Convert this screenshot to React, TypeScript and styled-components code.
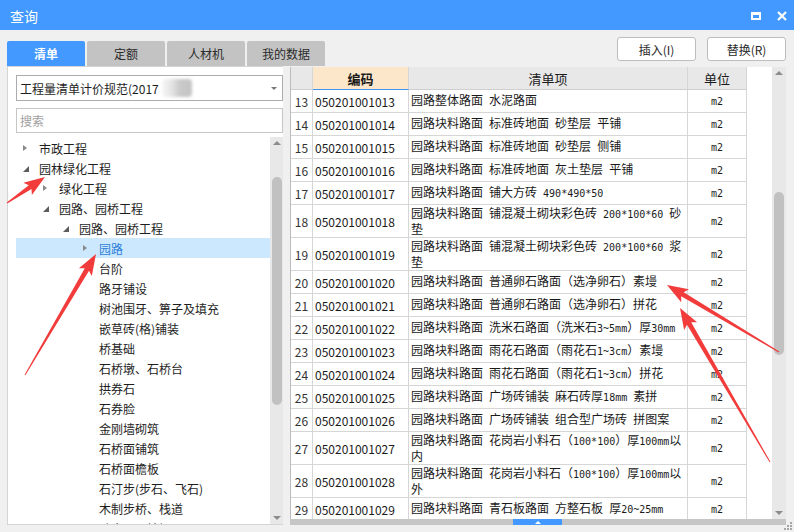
import React from 'react'
import styled, { createGlobalStyle } from 'styled-components'

const BLUE = '#4399ff'
const GRID = '#d6d6d6'

const GlobalStyle = createGlobalStyle`
  html, body {
    margin: 0;
    padding: 0;
    background: #f0f0f0;
    overflow: hidden;
  }
  body {
    font-family: "Noto Sans CJK SC", "Noto Sans", sans-serif;
  }
  * {
    box-sizing: border-box;
  }
`

interface TreeNode {
  label: string
  level: number
  icon?: 'open' | 'closed'
  selected?: boolean
}

const treeNodes: TreeNode[] = [
  { label: '市政工程', level: 0, icon: 'closed' },
  { label: '园林绿化工程', level: 0, icon: 'open' },
  { label: '绿化工程', level: 1, icon: 'closed' },
  { label: '园路、园桥工程', level: 1, icon: 'open' },
  { label: '园路、园桥工程', level: 2, icon: 'open' },
  { label: '园路', level: 3, icon: 'closed', selected: true },
  { label: '台阶', level: 3 },
  { label: '路牙铺设', level: 3 },
  { label: '树池围牙、箅子及填充', level: 3 },
  { label: '嵌草砖(格)铺装', level: 3 },
  { label: '桥基础', level: 3 },
  { label: '石桥墩、石桥台', level: 3 },
  { label: '拱券石', level: 3 },
  { label: '石券脸', level: 3 },
  { label: '金刚墙砌筑', level: 3 },
  { label: '石桥面铺筑', level: 3 },
  { label: '石桥面檐板', level: 3 },
  { label: '石汀步(步石、飞石)', level: 3 },
  { label: '木制步桥、栈道', level: 3 },
  { label: '踏步石、地坪石', level: 3 },
]

// [序号, 编码, 清单项 (one entry per line), 单位]
const rows: [string, string, string[], string][] = [
  ['13', '050201001013', ['园路整体路面 水泥路面'], 'm2'],
  ['14', '050201001014', ['园路块料路面 标准砖地面 砂垫层 平铺'], 'm2'],
  ['15', '050201001015', ['园路块料路面 标准砖地面 砂垫层 侧铺'], 'm2'],
  ['16', '050201001016', ['园路块料路面 标准砖地面 灰土垫层 平铺'], 'm2'],
  ['17', '050201001017', ['园路块料路面 铺大方砖 490*490*50'], 'm2'],
  ['18', '050201001018', ['园路块料路面 铺混凝土砌块彩色砖 200*100*60 砂', '垫'], 'm2'],
  ['19', '050201001019', ['园路块料路面 铺混凝土砌块彩色砖 200*100*60 浆', '垫'], 'm2'],
  ['20', '050201001020', ['园路块料路面 普通卵石路面（选净卵石）素墁'], 'm2'],
  ['21', '050201001021', ['园路块料路面 普通卵石路面（选净卵石）拼花'], 'm2'],
  ['22', '050201001022', ['园路块料路面 洗米石路面（洗米石3~5mm）厚30mm'], 'm2'],
  ['23', '050201001023', ['园路块料路面 雨花石路面（雨花石1~3cm）素墁'], 'm2'],
  ['24', '050201001024', ['园路块料路面 雨花石路面（雨花石1~3cm）拼花'], 'm2'],
  ['25', '050201001025', ['园路块料路面 广场砖铺装 麻石砖厚18mm 素拼'], 'm2'],
  ['26', '050201001026', ['园路块料路面 广场砖铺装 组合型广场砖 拼图案'], 'm2'],
  ['27', '050201001027', ['园路块料路面 花岗岩小料石（100*100）厚100mm以', '内'], 'm2'],
  ['28', '050201001028', ['园路块料路面 花岗岩小料石（100*100）厚100mm以', '外'], 'm2'],
  ['29', '050201001029', ['园路块料路面 青石板路面 方整石板 厚20~25mm'], 'm2'],
]

// red annotation arrows: tail x,y -> tip x,y
const arrows = [
  [7, 203, 45, 177],
  [25, 375, 96, 254],
  [779, 352, 667, 285],
  [770, 462, 680, 308],
]

const arrowPoints = (x1: number, y1: number, x2: number, y2: number) => {
  const dx = x2 - x1
  const dy = y2 - y1
  const len = Math.hypot(dx, dy)
  const ux = dx / len
  const uy = dy / len
  const nx = -uy
  const ny = ux
  const head = 18
  const hw = 7.5
  const sw = 2.4
  const tw = 0.5
  const bx = x2 - ux * head
  const by = y2 - uy * head
  const wx = bx - ux * 3
  const wy = by - uy * 3
  const pts = [
    [x1 + nx * tw, y1 + ny * tw],
    [bx + nx * sw, by + ny * sw],
    [wx + nx * hw, wy + ny * hw],
    [x2, y2],
    [wx - nx * hw, wy - ny * hw],
    [bx - nx * sw, by - ny * sw],
    [x1 - nx * tw, y1 - ny * tw],
  ]
  return pts.map(p => p.map(v => v.toFixed(1)).join(',')).join(' ')
}

// ascii runs are drawn half-width, as the old bitmap font does
const halfWidth = (text: string) =>
  text.split(/([\x20-\x7e]+)/).map((part, i) =>
    /^[\x20-\x7e]+$/.test(part) ? <Half key={i}>{part}</Half> : <React.Fragment key={i}>{part}</React.Fragment>
  )

const App: React.FC = () => {
  return (
    <>
      <GlobalStyle />
      <Window>
        <TitleBar>
          <TitleText>查询</TitleText>
          <MaxIcon />
          <CloseIcon width="10" height="10" viewBox="0 0 10 10">
            <path d="M1 1 L9 9 M9 1 L1 9" stroke="#fff" strokeWidth="2.2" />
          </CloseIcon>
        </TitleBar>

        <Body>
          <LeftPane>
            <Tabs>
              <Tab $active>清单</Tab>
              <Tab>定额</Tab>
              <Tab>人材机</Tab>
              <Tab>我的数据</Tab>
            </Tabs>
            <TabPanel>
              <Select>
                <span>工程量清单计价规范(2017</span>
                <Smudge />
                <SelectArrow />
              </Select>
              <Search>搜索</Search>
              <TreeBox>
                <TreeList>
                  {treeNodes.map((n, i) => (
                    <TreeRow key={i} $level={n.level} $selected={!!n.selected}>
                      <Toggle>{n.icon === 'open' ? <OpenTri /> : n.icon === 'closed' ? <ClosedTri /> : null}</Toggle>
                      {n.label}
                    </TreeRow>
                  ))}
                </TreeList>
                <ScrollTrack $width={13}>
                  <ArrowSlot><ScrollTri $dir="up" /></ArrowSlot>
                  <Thumb $top={28} $height={228} />
                  <Spacer />
                  <ArrowSlot><ScrollTri $dir="down" /></ArrowSlot>
                </ScrollTrack>
              </TreeBox>
            </TabPanel>
          </LeftPane>

          <RightPane>
            <ButtonRow>
              <Button>插入(I)</Button>
              <Button>替换(R)</Button>
            </ButtonRow>
            <TableFrame>
              <GridArea>
                <GridRow $height={23}>
                  <HeadCell />
                  <HeadCell $current>编码</HeadCell>
                  <HeadCell>清单项</HeadCell>
                  <HeadCell>单位</HeadCell>
                </GridRow>
                {rows.map(([num, code, lines, unit]) => (
                  <GridRow key={num} $height={lines.length > 1 ? 33 : 23}>
                    <NumCell>{num}</NumCell>
                    <CodeCell>{code}</CodeCell>
                    <ItemCell>
                      {lines.map((l, i) => (
                        <ItemLine key={i}>{halfWidth(l)}</ItemLine>
                      ))}
                    </ItemCell>
                    <UnitCell><Half>{unit}</Half></UnitCell>
                  </GridRow>
                ))}
              </GridArea>
              <ScrollTrack $width={14}>
                <ArrowSlot><ScrollTri $dir="up" /></ArrowSlot>
                <Thumb $top={113} $height={163} />
                <Spacer />
                <ArrowSlot><ScrollTri $dir="down" /></ArrowSlot>
              </ScrollTrack>
            </TableFrame>
            <HScroll>
              <Splitter>
                <SplitterTri />
              </Splitter>
            </HScroll>
          </RightPane>
        </Body>

        <Grip width="9" height="9" viewBox="0 0 9 9">
          {[[6, 0], [3, 3], [6, 3], [0, 6], [3, 6], [6, 6]].map(([x, y], i) => (
            <rect key={i} x={x} y={y} width="2" height="2" fill="#a6a6a6" />
          ))}
        </Grip>

        <Annotations width="794" height="532" viewBox="0 0 794 532">
          {arrows.map(([x1, y1, x2, y2], i) => (
            <polygon key={i} points={arrowPoints(x1, y1, x2, y2)} fill="#f23b3b" />
          ))}
        </Annotations>
      </Window>
    </>
  )
}

const Window = styled.div`
  position: relative;
  width: 794px;
  height: 532px;
  display: flex;
  flex-direction: column;
  background: #f0f0f0;
  overflow: hidden;
`

const TitleBar = styled.div`
  height: 30px;
  flex: none;
  display: flex;
  align-items: center;
  padding: 0 7px 0 10px;
  background: ${BLUE};
  color: #fff;
`

const TitleText = styled.div`
  flex: 1;
  font-size: 14px;
  line-height: 14px;
  margin-top: 2px;
`

const MaxIcon = styled.span`
  width: 10px;
  height: 8px;
  border: 2px solid #fff;
  border-top-width: 3px;
  margin-right: 16px;
  margin-top: 1px;
`

const CloseIcon = styled.svg`
  display: block;
  margin-top: 1px;
`

const Body = styled.div`
  flex: 1;
  min-height: 0;
  display: flex;
  gap: 7px;
  padding: 7px 8px 7px 7px;
`

const LeftPane = styled.div`
  width: 276px;
  flex: none;
  display: flex;
  flex-direction: column;
`

/* the last tab runs past the left pane, as in the original dialog */
const Tabs = styled.div`
  display: flex;
  gap: 2px;
  margin-top: 4px;
  height: 25px;
  flex: none;
`

const Tab = styled.div<{ $active?: boolean }>`
  width: 78px;
  flex: none;
  display: flex;
  align-items: center;
  justify-content: center;
  border-radius: 2px 2px 0 0;
  font-size: 12px;
  background: ${p => (p.$active ? BLUE : '#c3c3c3')};
  color: ${p => (p.$active ? '#fff' : '#2a2a2a')};
  font-weight: ${p => (p.$active ? 700 : 400)};
`

const TabPanel = styled.div`
  flex: 1;
  min-height: 0;
  display: flex;
  flex-direction: column;
  background: #fff;
  border: 1px solid #d4d4d4;
  border-right: none;
  padding: 8px 0 0 8px;
`

const Select = styled.div`
  height: 26px;
  flex: none;
  display: flex;
  align-items: center;
  border: 1px solid #acacac;
  padding-left: 3px;
  font-size: 12px;
  color: #1e1e1e;
`

const Smudge = styled.span`
  width: 30px;
  height: 18px;
  margin-left: 3px;
  background: linear-gradient(90deg, #f7f7f7 0%, #e2e2e2 35%, #c9c9c9 60%, #c4c4c4 100%);
  filter: blur(1.5px);
  border-radius: 4px;
`

const SelectArrow = styled.span`
  margin-left: auto;
  margin-right: 5px;
  width: 0;
  height: 0;
  border-left: 3px solid transparent;
  border-right: 3px solid transparent;
  border-top: 3px solid #777;
`

const Search = styled.div`
  height: 25px;
  flex: none;
  margin-top: 7px;
  display: flex;
  align-items: center;
  border: 1px solid #c6c6c6;
  padding-left: 3px;
  font-size: 12px;
  color: #a0a0a0;
`

const TreeBox = styled.div`
  flex: 1;
  min-height: 0;
  margin-top: 4px;
  display: flex;
`

const TreeList = styled.div`
  flex: 1;
  padding-top: 1px;
  overflow: hidden;
`

const TreeRow = styled.div<{ $level: number; $selected: boolean }>`
  height: 20px;
  display: flex;
  align-items: center;
  padding-left: ${p => 7 + p.$level * 20}px;
  font-size: 12px;
  white-space: nowrap;
  color: ${p => (p.$selected ? '#2f7fd8' : '#1e1e1e')};
  background: ${p => (p.$selected ? '#cce8ff' : 'transparent')};
`

const Toggle = styled.span`
  width: 16px;
  height: 20px;
  display: flex;
  align-items: center;
`

const ClosedTri = styled.span`
  width: 0;
  height: 0;
  border-top: 3.5px solid transparent;
  border-bottom: 3.5px solid transparent;
  border-left: 4px solid #8a8a8a;
`

const OpenTri = styled.span`
  width: 0;
  height: 0;
  margin-top: 1px;
  border-left: 6px solid transparent;
  border-bottom: 6px solid #5c5c5c;
`

const ScrollTrack = styled.div<{ $width: number }>`
  width: ${p => p.$width}px;
  flex: none;
  display: flex;
  flex-direction: column;
  align-items: center;
  background: #e8e8e8;
`

const ArrowSlot = styled.div`
  height: 12px;
  display: flex;
  align-items: center;
  justify-content: center;
`

const ScrollTri = styled.span<{ $dir: 'up' | 'down' }>`
  width: 0;
  height: 0;
  border-left: 4px solid transparent;
  border-right: 4px solid transparent;
  ${p => (p.$dir === 'up' ? 'border-bottom: 4px solid #8c8c8c;' : 'border-top: 4px solid #8c8c8c;')}
`

const Thumb = styled.div<{ $top: number; $height: number }>`
  width: 10px;
  margin-top: ${p => p.$top}px;
  height: ${p => p.$height}px;
  border-radius: 5px;
  background: #c1c1c1;
`

const Spacer = styled.div`
  flex: 1;
`

const RightPane = styled.div`
  flex: 1;
  min-width: 0;
  display: flex;
  flex-direction: column;
`

const ButtonRow = styled.div`
  height: 24px;
  flex: none;
  display: flex;
  justify-content: flex-end;
  gap: 11px;
  margin-bottom: 6px;
`

const Button = styled.div`
  width: 79px;
  display: flex;
  align-items: center;
  justify-content: center;
  background: #fff;
  border: 1px solid #bdbdbd;
  border-radius: 3px;
  font-size: 12px;
  color: #2a2a2a;
`

const TableFrame = styled.div`
  flex: 1;
  min-height: 0;
  display: flex;
`

const GridArea = styled.div`
  flex: 1;
  min-width: 0;
  background: #fff;
  border-left: 1px solid #bcbcbc;
  overflow: hidden;
`

const GridRow = styled.div<{ $height: number }>`
  display: grid;
  grid-template-columns: 22px 96px 279px 59px;
  height: ${p => p.$height}px;
`

const Cell = styled.div`
  display: flex;
  align-items: center;
  border-right: 1px solid ${GRID};
  border-bottom: 1px solid ${GRID};
  overflow: hidden;
  white-space: nowrap;
  font-size: 12px;
  color: #1a1a1a;
`

const HeadCell = styled(Cell)<{ $current?: boolean }>`
  justify-content: center;
  font-size: 13px;
  background: ${p => (p.$current ? '#fde7cb' : '#e8e8e8')};
  font-weight: ${p => (p.$current ? 700 : 400)};
  border-bottom: 1px solid ${p => (p.$current ? '#3f95f0' : '#cfcfcf')};
`

const NumCell = styled(Cell)`
  justify-content: center;
  color: #333;
`

const CodeCell = styled(Cell)`
  padding-left: 2px;
`

const ItemCell = styled(Cell)`
  flex-direction: column;
  align-items: flex-start;
  justify-content: center;
  padding-left: 2px;
`

const ItemLine = styled.div`
  line-height: 14px;
`

const UnitCell = styled(Cell)`
  justify-content: center;
`

const Half = styled.span`
  font-family: "DejaVu Sans Mono", "Liberation Mono", monospace;
  font-size: 10px;
  white-space: pre;
`

const HScroll = styled.div`
  height: 6px;
  flex: none;
  display: flex;
  background: #c6c6c6;
`

const Splitter = styled.div`
  width: 49px;
  margin-left: 223px;
  display: flex;
  align-items: center;
  justify-content: center;
  background: ${BLUE};
`

const SplitterTri = styled.span`
  width: 0;
  height: 0;
  border-left: 3px solid transparent;
  border-right: 3px solid transparent;
  border-bottom: 3px solid #fff;
`

const Grip = styled.svg`
  position: absolute;
  right: 1px;
  bottom: 1px;
`

const Annotations = styled.svg`
  position: absolute;
  left: 0;
  top: 0;
  pointer-events: none;
`

export default App
